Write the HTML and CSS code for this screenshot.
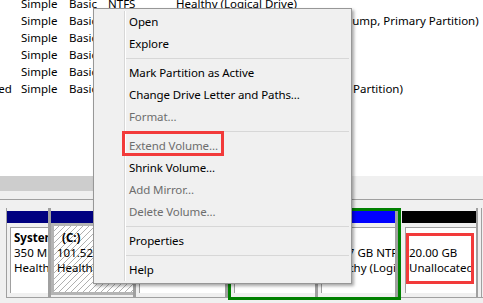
FILE: index.html
```html
<!DOCTYPE html>
<html lang="en">
<head>
    <meta charset="UTF-8">
    <title>Disk Management</title>
    <link rel="stylesheet" href="styles.css">
</head>
<body>

<div class="volumes">
    <div class="vol-list">
        <div class="vol-row"><span>(E:)</span><span>Simple</span><span>Basic</span><span>NTFS</span><span>Healthy (Logical Drive)</span></div>
        <div class="vol-row"><span>(C:)</span><span>Simple</span><span>Basic</span><span>NTFS</span><span>Healthy (Boot, Page File, Crash Dump, Primary Partition)</span></div>
        <div class="vol-row"><span>(D:)</span><span>Simple</span><span>Basic</span><span>NTFS</span><span>Healthy (Primary Partition)</span></div>
        <div class="vol-row"><span>(F:)</span><span>Simple</span><span>Basic</span><span>NTFS</span><span>Healthy (Logical Drive)</span></div>
        <div class="vol-row"><span>(G:)</span><span>Simple</span><span>Basic</span><span>NTFS</span><span>Healthy (Logical Drive)</span></div>
        <div class="vol-row"><span>System Reserved</span><span>Simple</span><span>Basic</span><span>NTFS</span><span>Healthy (System, Active, Primary Partition)</span></div>
    </div>
</div>

<div class="hscroll"><div class="hscroll-thumb"></div></div>
<div class="splitter"></div>

<div class="disk-pane">
    <div class="disk-row">
        <div class="part part-sys">
            <div class="bar bar-primary"></div>
            <div class="part-cell">
                <div class="part-box">
                    <div class="part-name">System Reserved</div>
                    <div>350 MB NTFS</div>
                    <div>Healthy (System, Active, Primary Partition)</div>
                </div>
            </div>
        </div>
        <div class="part part-c selected">
            <div class="bar bar-primary"></div>
            <div class="part-cell">
                <div class="part-box">
                    <div class="part-name part-name-drive">(C:)</div>
                    <div>101.52 GB NTFS</div>
                    <div>Healthy (Boot, Page File, Crash Dump, Primary Partition)</div>
                </div>
            </div>
        </div>
        <div class="part part-d">
            <div class="bar bar-primary"></div>
            <div class="part-cell">
                <div class="part-box">
                    <div class="part-name">(D:)</div>
                    <div>80.00 GB NTFS</div>
                    <div>Healthy (Primary Partition)</div>
                </div>
            </div>
        </div>
        <div class="extended">
            <div class="part part-e">
                <div class="bar bar-logical"></div>
                <div class="part-cell">
                    <div class="part-box">
                        <div class="part-name">(E:)</div>
                        <div>40.00 GB NTFS</div>
                        <div>Healthy (Logical Drive)</div>
                    </div>
                </div>
            </div>
            <div class="part part-f">
                <div class="bar bar-logical"></div>
                <div class="part-cell">
                    <div class="part-box">
                        <div class="part-name">(F:)</div>
                        <div>29.97 GB NTFS</div>
                        <div>Healthy (Logical Drive)</div>
                    </div>
                </div>
            </div>
        </div>
        <div class="part part-free">
            <div class="bar bar-free"></div>
            <div class="part-cell">
                <div class="part-box">
                    <div class="part-name"></div>
                    <div>20.00 GB</div>
                    <div>Unallocated</div>
                    <span class="callout callout-free"></span>
                </div>
            </div>
        </div>
        <div class="disk-end"></div>
    </div>
</div>

<div class="menu">
    <div class="menu-item">Open</div>
    <div class="menu-item">Explore</div>
    <div class="menu-sep"></div>
    <div class="menu-item">Mark Partition as Active</div>
    <div class="menu-item">Change Drive Letter and Paths...</div>
    <div class="menu-item disabled">Format...</div>
    <div class="menu-sep"></div>
    <div class="menu-item disabled">Extend Volume...<span class="callout callout-extend"></span></div>
    <div class="menu-item">Shrink Volume...</div>
    <div class="menu-item disabled">Add Mirror...</div>
    <div class="menu-item disabled">Delete Volume...</div>
    <div class="menu-sep"></div>
    <div class="menu-item">Properties</div>
    <div class="menu-sep"></div>
    <div class="menu-item">Help</div>
</div>

</body>
</html>
```

FILE: styles.css
```css
body {
    margin: 0;
    width: 483px;
    height: 303px;
    overflow: hidden;
    position: relative;
    background: #fff;
    font-family: "Noto Sans", "Liberation Sans", sans-serif;
    font-size: 11.5px;
    color: #000;
}

/* volume list (scrolled a bit to the right) */
.volumes {
    height: 176px;
    overflow: hidden;
}
.vol-list {
    margin-top: -5px;
    margin-left: -80px;
}
.vol-row {
    display: grid;
    grid-template-columns: 101px 48px 39px 68px auto;
    height: 17px;
    line-height: 17px;
    white-space: nowrap;
}
.vol-row span {
    overflow: hidden;
}

.hscroll {
    height: 17px;
    background: #f0f0f0;
}
.hscroll-thumb {
    width: 250px;
    height: 15px;
    background: #cdcdcd;
}
.splitter {
    height: 6px;
    background: #f0f0f0;
    border-bottom: 1px solid #a0a0a0;
}

/* graphical disk view */
.disk-pane {
    height: 103px;
    box-sizing: border-box;
    padding-top: 8px;
    background: #f0f0f0;
}
.disk-row {
    display: flex;
    align-items: flex-start;
    height: 89px;
    margin-left: 6px;
    border-left: 1px solid #a0a0a0;
    border-bottom: 1px solid #a0a0a0;
}
.part {
    display: flex;
    flex-direction: column;
    flex: none;
    height: 89px;
    box-sizing: border-box;
    padding-top: 3px;
    border-right: 3px solid #a0a0a0;
}
.part-sys { width: 44px; }
.part-c { width: 85px; }
.part-d { width: 92px; }
.part-e { width: 87px; }
.part-f { width: 80px; }
.part-free {
    width: 76px;
    border-right-width: 2px;
}
.extended {
    display: flex;
    flex: none;
    width: 173px;
    height: 92px;
    box-sizing: border-box;
    margin-right: 1px;
    border: 3px solid #008000;
}
.extended .part {
    height: 86px;
    padding-top: 0;
}
.disk-end {
    width: 3px;
    height: 89px;
    border-right: 1px solid #a0a0a0;
}

.bar {
    height: 12px;
    flex: none;
}
.bar-primary { background: #000080; }
.bar-logical { background: #0000ff; }
.bar-free { background: #000; }

.part-cell {
    flex: 1;
    display: flex;
    padding: 4px 0 4px 3px;
    min-height: 0;
}
.part-box {
    flex: 1;
    position: relative;
    overflow: hidden;
    padding: 2px 3px;
    background: #fff;
    border-left: 1px solid #a0a0a0;
    border-top: 1px solid #a0a0a0;
    line-height: 15px;
    white-space: nowrap;
}
.part-box div {
    height: 15px;
}
.part-name {
    font-weight: bold;
}
.part-name-drive {
    padding-left: 5px;
}

.selected .part-cell {
    padding: 0 0 2px 0;
}
.selected .part-box {
    padding: 4px 3px 0 3px;
    border: 3px solid #b4b4b4;
    border-right: none;
    background: repeating-linear-gradient(135deg, #fff 0 3.2px, #b0b0b0 3.2px 4.24px);
}

/* context menu */
.menu {
    position: absolute;
    left: 93px;
    top: 8px;
    width: 259px;
    box-sizing: border-box;
    padding: 2px;
    background: #f0f0f0;
    border: 1px solid #979797;
    box-shadow: 2px 2px 3px rgba(0, 0, 0, 0.35);
}
.menu::before {
    content: "";
    position: absolute;
    left: 30px;
    top: 2px;
    bottom: 2px;
    width: 1px;
    background: #d7d7d7;
    border-right: 1px solid #fff;
}
.menu-item {
    position: relative;
    height: 22px;
    line-height: 22px;
    padding-left: 33px;
    white-space: nowrap;
    letter-spacing: -0.1px;
}
.menu-item.disabled {
    color: #6d6d6d;
}
.menu-sep {
    height: 7px;
    margin-left: 29px;
    background: linear-gradient(#d7d7d7, #d7d7d7) 0 3px / 100% 1px no-repeat;
}

/* red highlight boxes */
.callout {
    position: absolute;
    box-sizing: border-box;
    border: 3px solid #f23a3a;
}
.callout-extend {
    left: 26px;
    top: -4px;
    width: 102px;
    height: 25px;
}
.callout-free {
    left: 0;
    top: 5px;
    width: 68px;
    height: 51px;
}
```
